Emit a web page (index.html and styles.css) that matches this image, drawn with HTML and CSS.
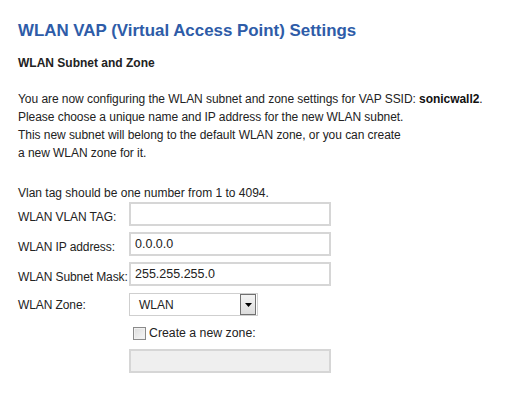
FILE: index.html
```html
<!DOCTYPE html>
<html lang="en">

<head>
    <meta charset="UTF-8">
    <title>WLAN VAP Settings</title>
    <link rel="stylesheet" href="styles.css">
</head>

<body>
    <h1 class="title">WLAN VAP (Virtual Access Point) Settings</h1>
    <h2 class="subtitle">WLAN Subnet and Zone</h2>

    <p class="intro">
        You are now configuring the WLAN subnet and zone settings for VAP SSID: <b>sonicwall2</b>.<br>
        Please choose a unique name and IP address for the new WLAN subnet.<br>
        This new subnet will belong to the default WLAN zone, or you can create<br>
        a new WLAN zone for it.
    </p>

    <p class="hint">Vlan tag should be one number from 1 to 4094.</p>

    <div class="form">
        <label class="label">WLAN VLAN TAG:</label>
        <input class="field" type="text" value="">

        <label class="label">WLAN IP address:</label>
        <input class="field" type="text" value="0.0.0.0">

        <label class="label">WLAN Subnet Mask:</label>
        <input class="field" type="text" value="255.255.255.0">

        <label class="label zone-label">WLAN Zone:</label>
        <div class="select">
            <span class="select-text">WLAN</span>
            <span class="select-btn">
                <svg width="7" height="4" viewBox="0 0 7 4">
                    <path d="M0 0 H7 L3.5 4 Z" fill="#000" />
                </svg>
            </span>
        </div>

        <span></span>
        <label class="check-row">
            <span class="checkbox"></span>
            Create a new zone:
        </label>

        <span></span>
        <div class="field disabled"></div>
    </div>
</body>

</html>
```

FILE: styles.css
```css
body {
    margin: 0;
    padding: 21px 18px 0;
    font-family: "Liberation Sans", Arial, sans-serif;
    font-size: 12px;
    color: #222;
    background: #fff;
}

.title {
    margin: 0;
    font-size: 16.9px;
    line-height: 20px;
    font-weight: bold;
    color: #2e5ca8;
}

.subtitle {
    margin: 15px 0 0;
    font-size: 12px;
    line-height: 14px;
    font-weight: bold;
    color: #222;
}

.intro {
    margin: 20px 0 0;
    line-height: 18px;
    letter-spacing: -0.05px;
}

.intro b {
    color: #111;
}

.hint {
    margin: 22px 0 0;
    line-height: 18px;
}

.form {
    display: grid;
    grid-template-columns: 111px 202px;
    align-items: center;
}

.label {
    align-self: center;
    white-space: nowrap;
    letter-spacing: -0.1px;
}

.field {
    box-sizing: border-box;
    width: 202px;
    height: 24px;
    margin: 0 0 6px;
    padding: 0 4px;
    border: 2px solid #d6d6d6;
    font-family: "Liberation Sans", Arial, sans-serif;
    font-size: 12.5px;
    color: #222;
    outline: none;
}

.zone-label {
    margin-top: 1px;
}

.select {
    box-sizing: border-box;
    display: flex;
    align-items: center;
    justify-content: space-between;
    width: 129px;
    height: 23px;
    margin-top: 1px;
    padding: 0 1px 0 9px;
    border: 1px solid #cfcfcf;
}

.select-btn {
    box-sizing: border-box;
    display: flex;
    align-items: center;
    justify-content: center;
    width: 16px;
    height: 21px;
    border: 1px solid #707070;
    background: linear-gradient(#f4f4f4, #dcdcdc);
}

.check-row {
    display: flex;
    align-items: center;
    gap: 3px;
    height: 16px;
    margin: 9px 0 8px 4px;
    font-size: 12.3px;
}

.checkbox {
    box-sizing: border-box;
    width: 13px;
    height: 13px;
    border: 1px solid #8a8a8a;
    background: linear-gradient(135deg, #dcdcdc, #f7f7f7);
    box-shadow: inset 0 0 0 1px #f0f0f0;
}

.disabled {
    background: #efefef;
    margin-top: 0;
}
```
